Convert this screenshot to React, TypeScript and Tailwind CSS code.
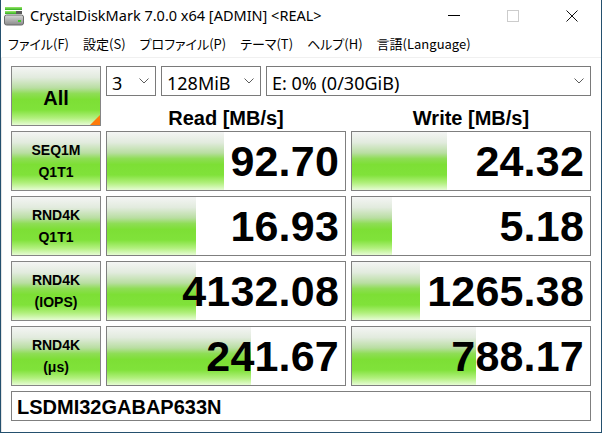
import React from 'react';

type Row = {
  name: string;
  sub: string;
  read: string;
  write: string;
  readBar: number;
  writeBar: number;
};

const rows: Row[] = [
  { name: 'SEQ1M', sub: 'Q1T1', read: '92.70', write: '24.32', readBar: 117, writeBar: 95 },
  { name: 'RND4K', sub: 'Q1T1', read: '16.93', write: '5.18', readBar: 89, writeBar: 40 },
  { name: 'RND4K', sub: '(IOPS)', read: '4132.08', write: '1265.38', readBar: 89, writeBar: 68 },
  { name: 'RND4K', sub: '(μs)', read: '241.67', write: '788.17', readBar: 144, writeBar: 124 },
];

const menu = ['ファイル(F)', '設定(S)', 'プロファイル(P)', 'テーマ(T)', 'ヘルプ(H)', '言語(Language)'];

// the lime "glass" gradient used by buttons and meter bars
const green =
  'bg-[linear-gradient(to_bottom,#f4f5f4_0%,#e2ebde_18%,#b9dea2_36%,#8edd55_46%,#7ddf35_56%,#80e23a_74%,#b2f07e_88%,#e6fcd4_100%)]';

const DiskIcon = () => (
  <svg width="20" height="20" viewBox="0 0 20 20">
    <defs>
      <linearGradient id="body" x1="0" y1="0" x2="0" y2="1">
        <stop offset="0" stopColor="#d8d8d8" />
        <stop offset="1" stopColor="#8a8a8a" />
      </linearGradient>
      <linearGradient id="bar" x1="0" y1="0" x2="0" y2="1">
        <stop offset="0" stopColor="#9be86a" />
        <stop offset="1" stopColor="#2fae1f" />
      </linearGradient>
    </defs>
    <rect x="1" y="1" width="17" height="3" fill="url(#bar)" />
    <rect x="1" y="5" width="11" height="3" fill="url(#bar)" />
    <rect x="12" y="5" width="6" height="3" fill="#5a5a5a" />
    <rect x="0.5" y="9" width="19" height="10" rx="2" fill="url(#body)" stroke="#6b6b6b" />
    <rect x="14" y="14" width="3" height="2" fill="#3fd028" />
  </svg>
);

const Chevron = () => (
  <svg width="10" height="6" viewBox="0 0 10 6" className="shrink-0">
    <path d="M0.5 0.5 L5 5 L9.5 0.5" fill="none" stroke="#5c5c5c" strokeWidth="1" />
  </svg>
);

const Select = ({ value, width }: { value: string; width: string }) => (
  <div className={`${width} h-[30px] border border-[#7a7a7a] bg-white flex items-center justify-between pl-[5px] pr-[6px]`}>
    <span className="text-[18px] leading-none text-black font-['Noto_Sans',sans-serif] pt-[3px]">{value}</span>
    <Chevron />
  </div>
);

const Meter = ({ value, bar }: { value: string; bar: number }) => (
  <div className="relative h-[60px] border border-[#7f7f7f] bg-white overflow-hidden flex items-center justify-end pr-[6px]">
    <div className={`absolute left-0 top-0 bottom-0 ${green}`} style={{ width: bar }} />
    <span className="relative text-[43px] font-bold leading-none text-black font-['Liberation_Sans',Arial,sans-serif] tracking-[0.2px]">
      {value}
    </span>
  </div>
);

export default function App() {
  return (
    <div className="w-[602px] h-[433px] bg-white border-x border-b border-[#24506e] flex flex-col overflow-hidden font-['Noto_Sans',sans-serif]">
      {/* title bar */}
      <div className="h-[31px] shrink-0 flex items-center">
        <div className="pl-[3px] pr-[6px] flex items-center">
          <DiskIcon />
        </div>
        <span className="text-[14.5px] text-black flex-1 pt-[1px]">CrystalDiskMark 7.0.0 x64 [ADMIN] &lt;REAL&gt;</span>
        <div className="w-[59px] h-full flex items-center justify-center">
          <div className="w-[12px] h-px bg-black" />
        </div>
        <div className="w-[59px] h-full flex items-center justify-center">
          <div className="w-[12px] h-[12px] border border-[#cccccc]" />
        </div>
        <div className="w-[59px] h-full flex items-center justify-center">
          <svg width="12" height="12" viewBox="0 0 12 12">
            <path d="M0.5 0.5 L11.5 11.5 M11.5 0.5 L0.5 11.5" stroke="#111" strokeWidth="1" />
          </svg>
        </div>
      </div>

      {/* menu bar */}
      <div className="h-[27px] shrink-0 flex items-center gap-[14px] px-[7px] border-b border-[#f0f0f0] font-['Noto_Sans_CJK_JP',sans-serif] [font-feature-settings:'palt'] text-[13px] text-black">
        {menu.map((m) => (
          <span key={m}>{m}</span>
        ))}
      </div>

      {/* main panel */}
      <div className="flex-1 border-l border-[#e4e4e4] pl-[9px] pr-[10px] pt-[8px] flex flex-col gap-[5px]">
        <div className="flex gap-[5px] h-[60px]">
          <div className={`relative w-[90px] h-[60px] border border-[#858585] ${green} flex items-center justify-center`}>
            <span className="text-[20px] font-bold text-black font-['Liberation_Sans',Arial,sans-serif] pt-[4px]">All</span>
            <div className="absolute right-0 bottom-0 w-0 h-0 border-l-[10px] border-l-transparent border-b-[10px] border-b-[#ff7b0a]" />
          </div>
          <div className="flex flex-col w-[485px]">
            <div className="flex gap-[5px]">
              <Select value="3" width="w-[50px]" />
              <Select value="128MiB" width="w-[100px]" />
              <Select value="E: 0% (0/30GiB)" width="w-[325px]" />
            </div>
            <div className="grid grid-cols-[240px_240px] gap-x-[5px] h-[30px] items-center font-['Liberation_Sans',Arial,sans-serif] text-[20px] font-bold text-black">
              <div className="text-center pt-[7px]">Read [MB/s]</div>
              <div className="text-center pt-[7px]">Write [MB/s]</div>
            </div>
          </div>
        </div>

        {rows.map((r, i) => (
          <div key={i} className="grid grid-cols-[90px_240px_240px] gap-x-[5px]">
            <div className={`h-[60px] border border-[#858585] ${green} flex flex-col items-center justify-center font-['Liberation_Sans',Arial,sans-serif] text-[14px] font-bold leading-[22px] text-black`}>
              <span>{r.name}</span>
              <span>{r.sub}</span>
            </div>
            <Meter value={r.read} bar={r.readBar} />
            <Meter value={r.write} bar={r.writeBar} />
          </div>
        ))}

        <div className="h-[30px] w-[580px] border border-[#7f7f7f] bg-white flex items-center pl-[5px]">
          <span className="text-[20px] font-bold text-black font-['Liberation_Sans',Arial,sans-serif] pt-[2px]">LSDMI32GABAP633N</span>
        </div>
      </div>
    </div>
  );
}
